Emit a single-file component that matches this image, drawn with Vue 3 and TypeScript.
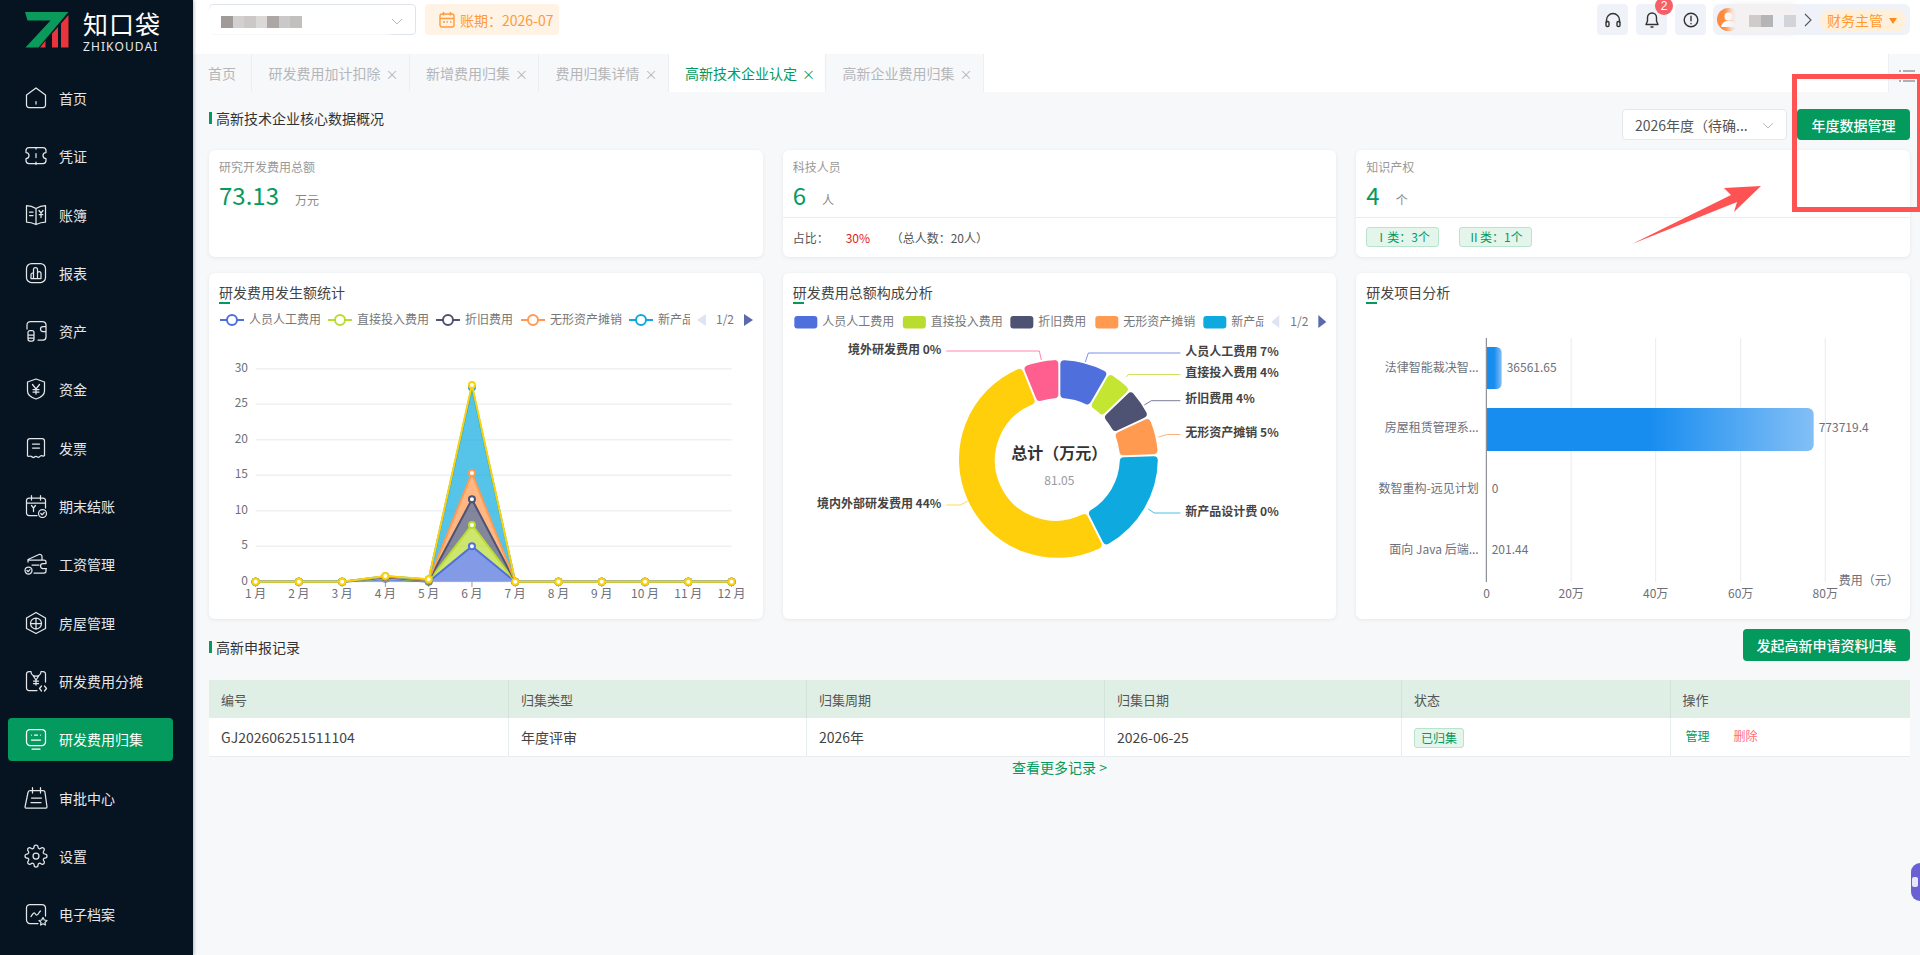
<template>
  <div class="app">
    <aside class="sidebar">
      <div class="logo">
        <svg class="logo-mark" width="44" height="36" viewBox="0 0 44 36">
          <path d="M0 0H43.5L40 4 13.5 35.5H0.5L25.5 8.5H2.5Z" fill="#0a9a5c" />
          <path d="M15 35.5 20.5 28.5V35.5ZM27 35.5V21.5L33 15V35.5ZM36 35.5V11.5L43.5 3V35.5Z" fill="#e8343a" />
        </svg>
        <div class="logo-text">
          <div class="logo-name">知口袋</div>
          <div class="logo-en">ZHIKOUDAI</div>
        </div>
      </div>
      <nav class="menu">
        <div v-for="item in menu" :key="item.label" class="menu-item" :class="{ active: item.active }">
          <svg width="24" height="24" viewBox="0 0 24 24" fill="none" stroke="currentColor" stroke-width="1.25" stroke-linecap="round" stroke-linejoin="round">
            <path :d="item.icon" />
          </svg>
          <span>{{ item.label }}</span>
        </div>
      </nav>
    </aside>

    <div class="main">
      <header class="topbar">
        <div class="topbar-left">
          <div class="company-select">
            <div class="blur-patch"></div>
            <div class="mosaic"></div>
            <svg class="chevron" width="12" height="12" viewBox="0 0 12 12" fill="none" stroke="#b8bcc4" stroke-width="1"><path d="M1 4l5 5 5-5" /></svg>
          </div>
          <div class="period">
            <svg width="16" height="17" viewBox="0 0 16 17" fill="none" stroke="#ff9a3c" stroke-width="1.4"><rect x="1" y="3" width="14" height="13" rx="2" /><path d="M1 7.5h14M4.5 1v3.5M11.5 1v3.5M4 11h2M7.5 11h1.5M11 11h1.5" /></svg>
            <span>账期：2026-07</span>
          </div>
        </div>
        <div class="topbar-right">
          <button class="icon-btn">
            <svg width="18" height="18" viewBox="0 0 18 18" fill="none" stroke="#333" stroke-width="1.4"><path d="M2.5 12V9a6.500 6.500 0 0 1 13 0v3" /><rect x="2" y="10.500" width="3" height="5" rx="1.200" /><rect x="13" y="10.500" width="3" height="5" rx="1.200" /></svg>
          </button>
          <button class="icon-btn bell">
            <svg width="18" height="18" viewBox="0 0 18 18" fill="none" stroke="#333" stroke-width="1.4" stroke-linejoin="round"><path d="M9 2a4.500 4.500 0 0 0-4.500 4.500V10L3 13.500h12L13.500 10V6.500A4.500 4.500 0 0 0 9 2zM7.500 16h3" /></svg>
            <span class="badge">2</span>
          </button>
          <button class="icon-btn">
            <svg width="18" height="18" viewBox="0 0 18 18" fill="none" stroke="#333" stroke-width="1.4" stroke-linecap="round"><circle cx="9" cy="9" r="6.800" /><path d="M9 5.200v4.600M9 12.400v.3" /></svg>
          </button>
          <div class="user">
            <svg class="avatar" width="23" height="23" viewBox="0 0 23 23"><circle cx="11.500" cy="11.500" r="11.500" fill="#ff8a3c" /><circle cx="11.500" cy="8.500" r="4" fill="#fff" /><path d="M4 19c1-4.500 4-6 7.500-6s6.500 1.500 7.500 6z" fill="#fff" /></svg>
            <div class="user-blur"></div>
            <div class="user-mosaic"></div>
            <svg class="user-arrow" width="8" height="14" viewBox="0 0 8 14" fill="none" stroke="#555" stroke-width="1.100"><path d="M1 1l6 6-6 6" /></svg>
            <div class="role">财务主管<i class="caret"></i></div>
          </div>
        </div>
      </header>

      <div class="tabs">
        <div v-for="tab in tabs" :key="tab.label" class="tab" :class="{ active: tab.active }">
          {{ tab.label }}<span v-if="tab.closable" class="tab-close">×</span>
        </div>
        <div class="tabs-fill"></div>
        <div class="tabs-more">
          <svg width="16" height="14" viewBox="0 0 16 14" fill="none" stroke="#667" stroke-width="1.200"><path d="M0 2h2M4 2h12M0 7h2M4 7h12M0 12h2M4 12h12" /></svg>
        </div>
      </div>

      <main class="content">
        <div class="section-row overview-row">
          <div class="section-title">高新技术企业核心数据概况</div>
          <div class="overview-actions">
            <div class="year-select">
              <span>2026年度（待确...</span>
              <svg width="12" height="12" viewBox="0 0 12 12" fill="none" stroke="#b8bcc4" stroke-width="1"><path d="M1 4l5 5 5-5" /></svg>
            </div>
            <button class="primary-btn year-btn">年度数据管理</button>
          </div>
        </div>

        <div class="grid stats">
          <div class="card stat">
            <div class="stat-head">
              <div class="stat-label">研究开发费用总额</div>
              <div class="stat-value"><b>73.13</b><span>万元</span></div>
            </div>
          </div>
          <div class="card stat">
            <div class="stat-head">
              <div class="stat-label">科技人员</div>
              <div class="stat-value"><b>6</b><span>人</span></div>
            </div>
            <div class="stat-foot ratio">
              <span class="ratio-key">占比：</span><span class="ratio-val">30%</span><span>（总人数：20人）</span>
            </div>
          </div>
          <div class="card stat">
            <div class="stat-head">
              <div class="stat-label">知识产权</div>
              <div class="stat-value"><b>4</b><span>个</span></div>
            </div>
            <div class="stat-foot tags">
              <span class="tag">Ⅰ类：3个</span>
              <span class="tag">Ⅱ类：1个</span>
            </div>
          </div>
        </div>

        <div class="grid charts">
          <!-- 折线图 -->
          <div class="card chart">
            <div class="chart-title">研发费用发生额统计</div>
            <svg class="chart-svg" viewBox="209 309 553.670 310">
              <defs>
                <clipPath id="legend-clip-a"><rect x="209" y="309" width="481" height="30" /></clipPath>
                <clipPath id="legend-clip-b"><rect x="783" y="309" width="480" height="30" /></clipPath>
                <linearGradient id="bar-fill" x1="0" y1="0" x2="1" y2="0" gradientUnits="objectBoundingBox">
                  <stop offset="0.5" stop-color="#188df0" />
                  <stop offset="1" stop-color="#83bff6" />
                </linearGradient>
              </defs>
              <g clip-path="url(#legend-clip-a)">
                <g v-for="l in lineLegend" :key="l.text">
                  <line :x1="l.x" :x2="l.x + 24" y1="320" y2="320" :stroke="l.color" stroke-width="2" />
                  <circle :cx="l.x + 12" cy="320" r="5" fill="#fff" :stroke="l.color" stroke-width="2" />
                  <text :x="l.x + 29" y="324" class="legend-text">{{ l.text }}</text>
                </g>
              </g>
              <polygon points="706,314 706,326 697,320" fill="#dfe4f2" />
              <text x="716" y="324" class="legend-text">1/2</text>
              <polygon points="744,314 744,326 753,320" fill="#5b6ab0" />

              <g v-for="t in yTicks" :key="t">
                <line x1="255.600" x2="731.600" :y1="py(t)" :y2="py(t)" stroke="#eef0f4" stroke-width="1.500" />
                <text x="248" :y="py(t) + 3" class="axis-text" text-anchor="end">{{ t }}</text>
              </g>
              <g v-for="(m, i) in months" :key="m">
                <line :x1="px(i)" :x2="px(i)" y1="582" y2="587" stroke="#9a9ca3" />
                <text :x="px(i)" y="598" class="axis-text" text-anchor="middle">{{ m }}</text>
              </g>
              <polygon v-for="b in bands" :key="b.color" :points="b.points" :fill="b.color" fill-opacity="0.7" />
              <g v-for="s in lineSeries" :key="s.color">
                <polyline :points="s.points" fill="none" :stroke="s.color" stroke-width="2" />
                <circle v-for="(d, i) in s.dots" :key="i" :cx="d[0]" :cy="d[1]" r="3" fill="#fff" :stroke="s.color" stroke-width="2" />
              </g>
            </svg>
          </div>

          <!-- 环形图 -->
          <div class="card chart">
            <div class="chart-title">研发费用总额构成分析</div>
            <svg class="chart-svg" viewBox="782.670 309 553.670 310">
              <g clip-path="url(#legend-clip-b)">
                <g v-for="l in pieLegend" :key="l.text">
                  <rect :x="l.x" y="316" width="23" height="12.500" rx="3" :fill="l.color" />
                  <text :x="l.x + 28" y="326" class="legend-text">{{ l.text }}</text>
                </g>
              </g>
              <polygon points="1279,315 1279,328 1271,322" fill="#dfe4f2" />
              <text x="1290" y="326" class="legend-text">1/2</text>
              <polygon points="1318,315 1318,328 1326,322" fill="#5b6ab0" />

              <path v-for="s in sectors" :key="s.color" :d="s.d" :fill="s.color" :stroke="s.color" stroke-width="8" stroke-linejoin="round" />
              <g v-for="p in pieLabels" :key="p.text">
                <polyline :points="p.line" fill="none" :stroke="p.color" stroke-width="1" stroke-opacity="0.75" />
                <text :x="p.x" :y="p.y" class="pie-label" :text-anchor="p.anchor">{{ p.text }}</text>
              </g>
              <text x="1059" y="459" class="pie-total" text-anchor="middle">总计（万元）</text>
              <text x="1059" y="485" class="axis-text light" text-anchor="middle">81.05</text>
            </svg>
          </div>

          <!-- 条形图 -->
          <div class="card chart">
            <div class="chart-title">研发项目分析</div>
            <svg class="chart-svg" viewBox="1356.330 309 553.670 310">
              <line v-for="g in barGrid" :key="g.x" :x1="g.x" :x2="g.x" y1="338" y2="582" stroke="#e9ebf0" />
              <text v-for="g in barTicks" :key="g.text" :x="g.x" y="598" class="axis-text" text-anchor="middle">{{ g.text }}</text>
              <text x="1839" y="585" class="axis-text">费用（元）</text>
              <path d="M1487 347H1496.500a5.500 5.500 0 0 1 5.500 5.500V383.500a5.500 5.500 0 0 1-5.500 5.500H1487Z" fill="url(#bar-small)" />
              <linearGradient id="bar-small" x1="0" y1="0" x2="1" y2="0">
                <stop offset="0.5" stop-color="#188df0" />
                <stop offset="1" stop-color="#83bff6" />
              </linearGradient>
              <path d="M1487 408H1808a6 6 0 0 1 6 6V445a6 6 0 0 1-6 6H1487Z" fill="url(#bar-fill)" />
              <line x1="1486.700" x2="1486.700" y1="338" y2="582" stroke="#8d9096" stroke-width="1.200" />
              <g v-for="r in barRows" :key="r.name">
                <text x="1479" :y="r.y + 4" class="axis-text" text-anchor="end">{{ r.name }}</text>
                <text :x="r.x" :y="r.y + 4" class="axis-text">{{ r.value }}</text>
              </g>
            </svg>
          </div>
        </div>

        <div class="section-row records-row">
          <div class="section-title">高新申报记录</div>
          <button class="primary-btn apply-btn">发起高新申请资料归集</button>
        </div>

        <div class="table">
          <div class="tr th">
            <div v-for="h in columns" :key="h">{{ h }}</div>
          </div>
          <div class="tr td">
            <div>GJ202606251511104</div>
            <div>年度评审</div>
            <div>2026年</div>
            <div>2026-06-25</div>
            <div><span class="tag status">已归集</span></div>
            <div class="ops"><a class="op-manage">管理</a><a class="op-delete">删除</a></div>
          </div>
        </div>
        <div class="more">查看更多记录 &gt;</div>
      </main>
    </div>

    <!-- 截图上的标注 -->
    <div class="mark-box"></div>
    <svg class="mark-arrow" width="140" height="70" viewBox="1630 180 140 70">
      <polygon points="1632,244 1731,195 1724,188 1761,186 1734,212 1737,202" fill="#ff5252" />
    </svg>
    <div class="float-widget"><i></i></div>
  </div>
</template>

<script setup lang="ts">
interface MenuItem {
  label: string
  icon: string
  active?: boolean
}

const menu: MenuItem[] = [
  { label: '首页', icon: 'M12 2l9.500 7v10a2.500 2.500 0 0 1-2.500 2.500H5A2.500 2.500 0 0 1 2.500 19V9zM12 15.500v2.500' },
  { label: '凭证', icon: 'M5 3.500h14a3 3 0 0 1 3 3v2a3 3 0 0 0 0 6v2a3 3 0 0 1-3 3H5a3 3 0 0 1-3-3v-2a3 3 0 0 0 0-6v-2a3 3 0 0 1 3-3zM12 3.500v1.500M12 9.500v4M12 18v2.500' },
  { label: '账簿', icon: 'M12 5.500C9 3.500 6 2.500 2.500 2.500V19C6 19 9 20 12 21.500 15 20 18 19 21.500 19V2.500C18 2.500 15 3.500 12 5.500zM12 5.500v16M5.500 9h3.500M5.500 12.500h3.500M15 7.500l2 2.500 2-2.500M17 10v4.500M15.200 11.500h3.600' },
  { label: '报表', icon: 'M7.500 2.500h9a5 5 0 0 1 5 5v9a5 5 0 0 1-5 5h-9a5 5 0 0 1-5-5v-9a5 5 0 0 1 5-5zM7 17.500h10M7 17.500v-4a1.500 1.500 0 0 1 2.500-1M9.500 17.500V8.500a2 2 0 0 1 4 0v9M13.500 17.500v-5.500a1.800 1.800 0 0 1 3.500 0v5.500' },
  { label: '资产', icon: 'M3 10V6a3.500 3.500 0 0 1 3.500-3.500h12A3.500 3.500 0 0 1 22 6v12a3 3 0 0 1-3 3h-5M22 7.500h-3a2.500 2.500 0 0 0 0 5h3M6 11.500h2a2 2 0 0 1 2 2V20a2 2 0 0 1-2 2H6a2 2 0 0 1-2-2v-6.500a2 2 0 0 1 2-2zM4 16h6M4 19h6' },
  { label: '资金', icon: 'M12 2l8.500 3v9c0 3.500-3.500 6.500-8.500 8-5-1.500-8.500-4.500-8.500-8V5zM8.500 7.500L12 12l3.500-4.500M12 12v5M9 12.500h6M9 15h6' },
  { label: '发票', icon: 'M6 2.500h12a2.500 2.500 0 0 1 2.500 2.500v14.500c-1.500 1.500-2.500-.5-4 .5s-1.500 2-3 1-2-1-3 0-2 .5-3-.5-2.500.5-4-.5V5A2.500 2.500 0 0 1 6 2.500zM8.500 8h7M8.500 12h7' },
  { label: '期末结账', icon: 'M5 4h14a2.500 2.500 0 0 1 2.500 2.500V14M13 21.500H5A2.500 2.500 0 0 1 2.500 19V6.500A2.500 2.500 0 0 1 5 4M7.500 1.500V6M16.500 1.500V6M3 9h18M7.500 11.500L9.500 14l2-2.500M9.500 14v3.500M18.500 15.500a4 4 0 1 0 0 8 4 4 0 0 0 0-8zM16.800 19.500l1.400 1.300 2-2.300' },
  { label: '工资管理', icon: 'M4 10V7.500L15 2.500c1.500-.5 3 .5 3 2V8M5 8h15a2 2 0 0 1 2 2v1.500M22 17v2a2 2 0 0 1-2 2H10M22 11.500h-3a2.500 2.500 0 0 0 0 5h3.500M8 13h7M4.500 15a3.500 3.500 0 1 0 0 7 3.500 3.500 0 0 0 0-7zM3 18.500l1.200 1.200 1.800-2' },
  { label: '房屋管理', icon: 'M12 1.500l9.500 5.500v10.500L12 22.500 2.500 17.500V7zM12 7a5.500 5.500 0 1 0 0 11 5.500 5.500 0 0 0 0-11zM12 7v11M6.500 12.500h11' },
  { label: '研发费用分摊', icon: 'M7 2.500H5A2.500 2.500 0 0 0 2.500 5v14A2.500 2.500 0 0 0 5 21.500h8M17 2.500h2A2.500 2.500 0 0 1 21.500 5v8M7 2.500c0 6 10 6 10 0M9 6.500l3 4.500 3-4.500M12 11v5M9.500 12h5M9.500 14.500h5M17.500 17l-2 2.500 2 2.500M20.500 17l2 2.500-2 2.500' },
  { label: '研发费用归集', icon: 'M6 2.500h12A3.500 3.500 0 0 1 21.500 6v9a3.500 3.500 0 0 1-3.500 3.500H6A3.500 3.500 0 0 1 2.500 15V6A3.500 3.500 0 0 1 6 2.500zM8 22h8M7.500 8h.01M16.500 8h.01M10.500 8h3M7.500 13h9', active: true },
  { label: '审批中心', icon: 'M6 4.500h13a2 2 0 0 1 2 2L23 21a1 1 0 0 1-1 1H2a1 1 0 0 1-1-1l3-14.500a2.500 2.500 0 0 1 2-2zM8.500 1.500V7M16.500 1.500V7M7.500 12h10M7 16.500h10' },
  { label: '设置', icon: 'M12 15a3 3 0 1 0 0-6 3 3 0 0 0 0 6zM19.400 15a1.650 1.650 0 0 0 .33 1.820l.06.06a2 2 0 0 1 0 2.830 2 2 0 0 1-2.830 0l-.06-.06a1.650 1.650 0 0 0-1.820-.33 1.650 1.650 0 0 0-1 1.510V21a2 2 0 0 1-2 2 2 2 0 0 1-2-2v-.09A1.650 1.650 0 0 0 9 19.400a1.650 1.650 0 0 0-1.820.33l-.06.06a2 2 0 0 1-2.830 0 2 2 0 0 1 0-2.830l.06-.06a1.650 1.650 0 0 0 .33-1.820 1.650 1.650 0 0 0-1.510-1H3a2 2 0 0 1-2-2 2 2 0 0 1 2-2h.09A1.650 1.650 0 0 0 4.600 9a1.650 1.650 0 0 0-.33-1.820l-.06-.06a2 2 0 0 1 0-2.830 2 2 0 0 1 2.830 0l.06.06a1.650 1.650 0 0 0 1.820.33H9a1.650 1.650 0 0 0 1-1.510V3a2 2 0 0 1 2-2 2 2 0 0 1 2 2v.09a1.650 1.650 0 0 0 1 1.510 1.650 1.650 0 0 0 1.820-.33l.06-.06a2 2 0 0 1 2.830 0 2 2 0 0 1 0 2.830l-.06.06a1.650 1.650 0 0 0-.33 1.820V9a1.650 1.650 0 0 0 1.510 1H21a2 2 0 0 1 2 2 2 2 0 0 1-2 2h-.09a1.650 1.650 0 0 0-1.510 1z' },
  { label: '电子档案', icon: 'M14 21.500H6A3.500 3.500 0 0 1 2.500 18V6A3.500 3.500 0 0 1 6 2.500h12A3.500 3.500 0 0 1 21.500 6v8M7 14.500c1.500-2 2.500-4 3.500-3.500s1 2.500 2.500 2 2-3 3.500-4M19 15.500l1.300 2.500 2.700.5-2 1.900.4 2.600-2.400-1.200-2.400 1.200.4-2.600-2-1.900 2.700-.5z' }
]

const tabs = [
  { label: '首页', closable: false },
  { label: '研发费用加计扣除', closable: true },
  { label: '新增费用归集', closable: true },
  { label: '费用归集详情', closable: true },
  { label: '高新技术企业认定', closable: true, active: true },
  { label: '高新企业费用归集', closable: true }
]

const COLORS = {
  blue: '#4f6fdc',
  green: '#b9dc2f',
  dark: '#4e5273',
  orange: '#ff9a50',
  cyan: '#0eaadf',
  yellow: '#fdd10b',
  pink: '#ff5f8f'
}

const lineLegend = [
  { x: 220, text: '人员人工费用', color: COLORS.blue },
  { x: 328, text: '直接投入费用', color: COLORS.green },
  { x: 436, text: '折旧费用', color: COLORS.dark },
  { x: 521, text: '无形资产摊销', color: COLORS.orange },
  { x: 629, text: '新产品设计费', color: COLORS.cyan }
]

const pieLegend = [
  { x: 794, text: '人员人工费用', color: COLORS.blue },
  { x: 902.5, text: '直接投入费用', color: COLORS.green },
  { x: 1010, text: '折旧费用', color: COLORS.dark },
  { x: 1095, text: '无形资产摊销', color: COLORS.orange },
  { x: 1203, text: '新产品设计费', color: COLORS.cyan }
]

// 折线图坐标
const px = (i: number) => 255.6 + i * 43.27
const py = (v: number) => 581.7 - v * 7.1
const yTicks = [0, 5, 10, 15, 20, 25, 30]
const months = ['1 月', '2 月', '3 月', '4 月', '5 月', '6 月', '7 月', '8 月', '9 月', '10 月', '11 月', '12 月']

// 堆叠后的累计值
const stacked: { color: string; values: number[] }[] = [
  { color: COLORS.blue, values: [0, 0, 0, 0.4, 0, 5, 0, 0, 0, 0, 0, 0] },
  { color: COLORS.green, values: [0, 0, 0, 0.5, 0.1, 8, 0, 0, 0, 0, 0, 0] },
  { color: COLORS.dark, values: [0, 0, 0, 0.6, 0.15, 11.6, 0, 0, 0, 0, 0, 0] },
  { color: COLORS.orange, values: [0, 0, 0, 0.7, 0.2, 15.3, 0, 0, 0, 0, 0, 0] },
  { color: COLORS.cyan, values: [0, 0, 0, 0.75, 0.3, 27.4, 0, 0, 0, 0, 0, 0] },
  { color: COLORS.yellow, values: [0, 0, 0, 0.8, 0.35, 27.7, 0, 0, 0, 0, 0, 0] }
]

const bands = stacked.slice(0, 5).map((s, k) => {
  const upper = s.values.map((v, i) => `${px(i)},${py(v)}`)
  const lower = (k === 0 ? s.values.map(() => 0) : stacked[k - 1].values).map((v, i) => `${px(i)},${py(v)}`).reverse()
  return { color: s.color, points: [...upper, ...lower].join(' ') }
})

const lineSeries = stacked.map((s) => ({
  color: s.color,
  points: s.values.map((v, i) => `${px(i)},${py(v)}`).join(' '),
  dots: s.values.map((v, i) => [px(i), py(v)])
}))

// 环形图
const CX = 1059
const CY = 458.5
const polar = (r: number, deg: number) => {
  const a = (deg * Math.PI) / 180
  return `${(CX + r * Math.sin(a)).toFixed(2)} ${(CY - r * Math.cos(a)).toFixed(2)}`
}
const sectorPath = (from: number, to: number) => {
  const corner = 4
  const outer = 98.5 - corner
  const inner = 60.5 + corner
  const gap = corner + 1
  const insetOuter = ((gap / outer) * 180) / Math.PI
  const insetInner = ((gap / inner) * 180) / Math.PI
  const large = to - from > 180 ? 1 : 0
  return `M${polar(outer, from + insetOuter)}A${outer} ${outer} 0 ${large} 1 ${polar(outer, to - insetOuter)}L${polar(inner, to - insetInner)}A${inner} ${inner} 0 ${large} 0 ${polar(inner, from + insetInner)}Z`
}
const sectors = [
  { color: COLORS.blue, from: 0, to: 30 },
  { color: '#c4e633', from: 30, to: 46 },
  { color: COLORS.dark, from: 46, to: 65 },
  { color: COLORS.orange, from: 65, to: 88 },
  { color: COLORS.cyan, from: 88, to: 153 },
  { color: '#ffcf0b', from: 153, to: 338 },
  { color: COLORS.pink, from: 338, to: 360 }
].map((s) => ({ color: s.color, d: sectorPath(s.from, s.to) }))

const pieLabels = [
  { text: '人员人工费用 7%', x: 1185, y: 356, anchor: 'start', color: COLORS.blue, line: '1085,362 1088,353 1180,353' },
  { text: '直接投入费用 4%', x: 1185, y: 377, anchor: 'start', color: COLORS.green, line: '1126,377 1128,374.500 1180,374.500' },
  { text: '折旧费用 4%', x: 1185, y: 403, anchor: 'start', color: COLORS.dark, line: '1144,405 1151,400.700 1180,400.700' },
  { text: '无形资产摊销 5%', x: 1185, y: 437, anchor: 'start', color: COLORS.orange, line: '1158,437 1167,434.500 1180,434.500' },
  { text: '新产品设计费 0%', x: 1185, y: 516, anchor: 'start', color: COLORS.cyan, line: '1148,509 1154,513 1180,513' },
  { text: '境外研发费用 0%', x: 941, y: 354, anchor: 'end', color: COLORS.pink, line: '1041,360 1039,351 946,351' },
  { text: '境内外部研发费用 44%', x: 941, y: 508, anchor: 'end', color: COLORS.yellow, line: '967.500,501 960,505 946,505' }
]

// 条形图
const barGrid = [{ x: 1571.5 }, { x: 1656 }, { x: 1741 }, { x: 1825.6 }]
const barTicks = [
  { x: 1487, text: '0' },
  { x: 1571.5, text: '20万' },
  { x: 1656, text: '40万' },
  { x: 1741, text: '60万' },
  { x: 1825.6, text: '80万' }
]
const barRows = [
  { name: '法律智能裁决智...', value: '36561.65', y: 368, x: 1507 },
  { name: '房屋租赁管理系...', value: '773719.4', y: 428, x: 1819 },
  { name: '数智重构-远见计划', value: '0', y: 489, x: 1492 },
  { name: '面向 Java 后端...', value: '201.44', y: 550, x: 1492 }
]

const columns = ['编号', '归集类型', '归集周期', '归集日期', '状态', '操作']
</script>

<style scoped>
.app {
  position: relative;
  display: flex;
  height: 955px;
  overflow: hidden;
  background: #f6f8fa;
  font-family: "Noto Sans CJK SC", "Noto Sans", sans-serif;
  color: #333;
}

/* 侧边栏 */
.sidebar {
  width: 193px;
  flex-shrink: 0;
  background: #061321;
  box-shadow: 1px 0 3px rgba(0, 0, 0, 0.25);
  z-index: 2;
}

.logo {
  display: flex;
  gap: 14px;
  height: 76px;
  padding: 12px 0 0 25px;
  box-sizing: border-box;
}

.logo-mark {
  display: block;
}

.logo-text {
  color: #fff;
  margin-top: -4px;
}

.logo-name {
  font-size: 25px;
  line-height: 30px;
  letter-spacing: 1px;
}

.logo-en {
  font-size: 12px;
  line-height: 16px;
  letter-spacing: 1.100px;
  font-family: "Noto Sans", sans-serif;
  margin-top: 1px;
  color: #e6e9ec;
}

.menu {
  display: flex;
  flex-direction: column;
  gap: 15.300px;
  padding-top: 0.500px;
}

.menu-item {
  display: flex;
  align-items: center;
  gap: 11px;
  width: 165px;
  height: 43px;
  margin-left: 8px;
  padding-left: 16px;
  box-sizing: border-box;
  border-radius: 4px;
  color: #e4e6e8;
  font-size: 14px;
}

.menu-item svg {
  flex-shrink: 0;
}

.menu-item.active {
  background: #049a5e;
  color: #fff;
}

/* 顶栏 */
.main {
  flex: 1;
  min-width: 0;
  display: flex;
  flex-direction: column;
}

.topbar {
  height: 54px;
  flex-shrink: 0;
  display: flex;
  justify-content: space-between;
  padding: 4px 10px 0 16px;
  box-sizing: border-box;
  background: #fff;
}

.topbar-left,
.topbar-right {
  display: flex;
  align-items: flex-start;
}

.company-select {
  position: relative;
  width: 207px;
  height: 31px;
  box-sizing: border-box;
  border: 1px solid #dfe3ea;
  border-radius: 4px;
  margin-right: 9px;
}

.blur-patch {
  position: absolute;
  left: -8px;
  top: 3px;
  width: 188px;
  height: 28px;
  background: #fff;
  filter: blur(2px);
}

.mosaic {
  position: absolute;
  left: 11px;
  top: 11px;
  width: 81px;
  height: 12px;
  filter: blur(0.4px);
  background: linear-gradient(90deg, #a09a98 0 12px, #d2d0d0 12px 23px, #cdc8c8 23px 35px, #dbd8d8 35px 46px, #aca7a5 46px 58px, #cac8c8 58px 69px, #c2bfbf 69px 81px);
}

.chevron {
  position: absolute;
  right: 12px;
  top: 10px;
}

.period {
  display: flex;
  align-items: center;
  gap: 5px;
  width: 134px;
  height: 31px;
  padding-left: 14px;
  box-sizing: border-box;
  border-radius: 4px;
  background: #fff3e6;
  color: #ff9a3c;
  font-size: 14px;
}

.icon-btn {
  position: relative;
  width: 31px;
  height: 31px;
  margin-right: 8px;
  padding: 0;
  border: none;
  border-radius: 4px;
  background: #eff2f8;
  display: flex;
  align-items: center;
  justify-content: center;
}

.badge {
  position: absolute;
  top: -7px;
  right: -6px;
  width: 18px;
  height: 18px;
  border-radius: 50%;
  background: #f4606a;
  color: #fff;
  font-size: 12px;
  line-height: 18px;
  text-align: center;
}

.user {
  position: relative;
  display: flex;
  align-items: center;
  width: 197px;
  height: 31px;
  margin-left: -1px;
  border-radius: 6px;
  background: #eff2f8;
}

.avatar {
  position: absolute;
  left: 4px;
  top: 4px;
}

.user-blur {
  position: absolute;
  left: 16px;
  top: 0;
  width: 66px;
  height: 30px;
  background: #f3f1f1;
  filter: blur(3px);
}

.user-mosaic {
  position: absolute;
  left: 36px;
  top: 11px;
  width: 47px;
  height: 12px;
  filter: blur(0.4px);
  background: linear-gradient(90deg, #cfcbcb 0 12px, #b5b5b8 12px 24px, #f0f2f7 24px 35px, #d2d4d9 35px 47px);
}

.user-arrow {
  position: absolute;
  left: 91px;
  top: 9px;
}

.role {
  position: absolute;
  left: 107px;
  top: 5px;
  width: 86px;
  height: 23px;
  padding-left: 7px;
  box-sizing: border-box;
  border-radius: 12px;
  background: #fff0dc;
  color: #ff9a2e;
  font-size: 14px;
  line-height: 23px;
}

.caret {
  position: absolute;
  right: 9px;
  top: 9px;
  border-left: 4.500px solid transparent;
  border-right: 4.500px solid transparent;
  border-top: 6px solid #ff8a1e;
}

/* 标签页 */
.tabs {
  height: 38px;
  flex-shrink: 0;
  display: flex;
  background: #fff;
}

.tab {
  display: flex;
  align-items: center;
  padding: 0 15px 0 16.500px;
  background: #f7f8fa;
  border-right: 1px solid #eceef2;
  color: #b4b6ba;
  font-size: 14px;
  white-space: nowrap;
}

.tab:first-child {
  padding: 0 15px;
}

.tab.active {
  background: #fff;
  color: #049a5e;
}

.tab-close {
  margin-left: 5px;
  width: 8px;
  font-size: 13px;
}

.tabs-fill {
  flex: 1;
}

.tabs-more {
  width: 32px;
  padding: 10px 0 0 10px;
  box-sizing: border-box;
  background: #f7f8fa;
  border-left: 1px solid #eceef2;
}

/* 内容区 */
.content {
  flex: 1;
  min-height: 0;
  padding: 17px 10px 0 16px;
}

.section-row {
  display: flex;
  justify-content: space-between;
}

.overview-row {
  height: 31px;
  margin-bottom: 10px;
}

.section-title {
  position: relative;
  height: 20px;
  padding-left: 7px;
  font-size: 14px;
  line-height: 20px;
  color: #333;
  margin-top: -1px;
}

.section-title::before {
  content: "";
  position: absolute;
  left: 0;
  top: 4px;
  width: 3px;
  height: 12px;
  background: #049a5e;
}

.overview-actions {
  display: flex;
  gap: 10px;
}

.year-select {
  display: flex;
  align-items: center;
  justify-content: space-between;
  width: 165px;
  height: 31px;
  padding: 0 12px;
  box-sizing: border-box;
  border: 1px solid #e4e7ed;
  border-radius: 4px;
  background: #fff;
  color: #555;
  font-size: 14px;
  white-space: nowrap;
}

.primary-btn {
  border: none;
  border-radius: 4px;
  background: #049a5e;
  color: #fff;
  font-family: inherit;
  font-size: 14px;
  font-weight: 500;
  padding: 0;
}

.year-btn {
  width: 113px;
  height: 31px;
}

.grid {
  display: grid;
  grid-template-columns: repeat(3, 1fr);
  gap: 20px;
}

.card {
  background: #fff;
  border-radius: 6px;
  box-shadow: 0 1px 4px rgba(0, 0, 0, 0.07);
}

.stats {
  height: 107px;
  margin-bottom: 16px;
}

.stat-head {
  height: 67px;
  padding: 9px 10px 0;
  box-sizing: border-box;
}

.stat-label {
  font-size: 12px;
  line-height: 16px;
  color: #999;
}

.stat-value {
  display: flex;
  align-items: baseline;
  margin-top: 5px;
  line-height: 30px;
}

.stat-value b {
  font-size: 24px;
  font-weight: 400;
  color: #049a5e;
}

.stat-value span {
  margin-left: 16px;
  font-size: 12px;
  color: #888;
}

.stat-foot {
  height: 40px;
  padding: 0 10px;
  box-sizing: border-box;
  border-top: 1px solid #ececec;
  display: flex;
  align-items: center;
  font-size: 12px;
  color: #555;
}

.ratio-key {
  width: 53px;
}

.ratio-val {
  width: 45px;
  color: #e02020;
}

.tags {
  gap: 20px;
  padding-bottom: 1px;
}

.tag {
  display: inline-block;
  height: 20px;
  padding: 0 8px;
  box-sizing: border-box;
  border: 1px solid #b8e4cd;
  border-radius: 3px;
  background: #e4f5ec;
  color: #049a5e;
  font-size: 12px;
  line-height: 18px;
}

.charts {
  height: 346px;
  margin-bottom: 10px;
}

.chart {
  min-width: 0;
}

.chart-title {
  position: relative;
  height: 36px;
  padding: 9px 0 0 10px;
  box-sizing: border-box;
  font-size: 14px;
  line-height: 20px;
  color: #444;
}

.chart-title::after {
  content: "";
  position: absolute;
  left: 10px;
  top: 29px;
  width: 11px;
  height: 2px;
  background: #049a5e;
}

.chart-svg {
  display: block;
  width: 100%;
  height: 310px;
}

.legend-text {
  font-size: 12px;
  fill: #777;
}

.axis-text {
  font-size: 12px;
  fill: #6e7079;
}

.axis-text.light {
  fill: #999;
}

.pie-label {
  font-size: 12px;
  font-weight: 700;
  fill: #444;
}

.pie-total {
  font-size: 16px;
  font-weight: 700;
  fill: #333;
}

.records-row {
  height: 32px;
  margin-bottom: 19px;
}

.records-row .section-title {
  margin-top: 8px;
}

.apply-btn {
  width: 167px;
  height: 32px;
}

.table {
  background: #fff;
  border-bottom: 1px solid #e8edf2;
}

.tr {
  display: grid;
  grid-template-columns: 300px 298px 298px 297px 268.500px 1fr;
}

.tr > div {
  display: flex;
  align-items: center;
  padding-left: 12px;
  box-sizing: border-box;
  border-right: 1px solid #e8eef0;
}

.tr > div:last-child {
  border-right: none;
}

.th {
  height: 38px;
  background: #e0efe6;
  font-size: 13px;
  color: #555;
}

.th > div {
  border-right-color: #d2e3d9;
}

.td {
  height: 38px;
  font-size: 14px;
  color: #444;
}

.status {
  padding: 0 6px;
  margin-top: 1px;
}

.ops {
  gap: 24px;
  padding-left: 15px !important;
  padding-bottom: 4px;
  font-size: 12px;
}

.op-manage {
  color: #049a5e;
}

.op-delete {
  color: #ff6b7a;
}

.more {
  margin-top: 1px;
  text-align: center;
  font-size: 14px;
  line-height: 18px;
  color: #049a5e;
}

/* 标注 */
.mark-box {
  position: absolute;
  left: 1792px;
  top: 74px;
  width: 128px;
  height: 138px;
  box-sizing: border-box;
  border: 5px solid #ff5252;
  border-right-width: 3px;
}

.mark-arrow {
  position: absolute;
  left: 1630px;
  top: 180px;
}

.float-widget {
  position: absolute;
  left: 1911px;
  top: 863px;
  width: 20px;
  height: 38px;
  border-radius: 9px;
  background: #6a60d4;
}

.float-widget i {
  position: absolute;
  left: 1px;
  top: 14px;
  width: 6px;
  height: 10px;
  border-radius: 2px;
  background: #e8e6fa;
}
</style>

<style>
body {
  background: #f6f8fa;
}
</style>
